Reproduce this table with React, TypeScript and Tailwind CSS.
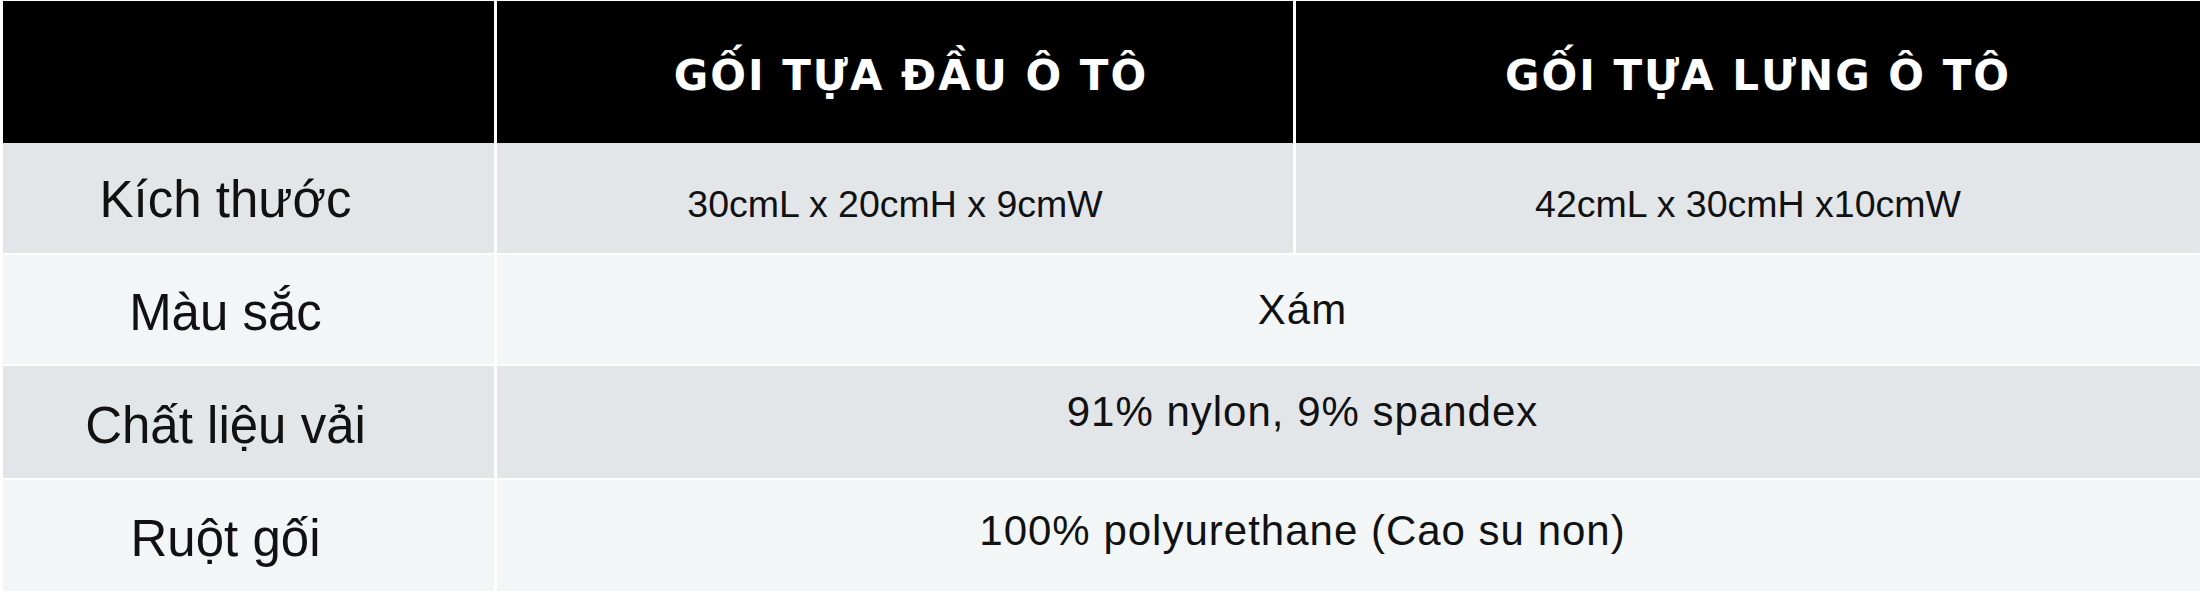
import React from 'react';

const rows = [
  { label: 'Màu sắc', value: 'Xám', bg: 'bg-[#f3f6f6]', h: 'h-[109px]', vp: 'pb-0' },
  { label: 'Chất liệu vải', value: '91% nylon, 9% spandex', bg: 'bg-[#e2e6e9]', h: 'h-[112px]', vp: 'pb-[22px]' },
  { label: 'Ruột gối', value: '100% polyurethane (Cao su non)', bg: 'bg-[#f3f6f6]', h: 'h-[111px]', vp: 'pb-[10px]' },
];

export default function App() {
  return (
    <div className="w-[2203px] h-[592px] bg-white pl-[3px] pt-[1px] font-['Liberation_Sans',Arial,sans-serif] text-[#111]">
      <div className="w-[2197px] flex flex-col">
        {/* header */}
        <div className="grid grid-cols-[491px_796px_904px] gap-x-[3px] h-[142px]">
          <div className="bg-black" />
          <div className="bg-black flex items-center justify-center pl-[32px] pt-[6px]">
            <span className="font-['DejaVu_Sans',sans-serif] font-bold text-[42px] tracking-[2px] text-white">GỐI TỰA ĐẦU Ô TÔ</span>
          </div>
          <div className="bg-black flex items-center justify-center pl-[20px] pt-[6px]">
            <span className="font-['DejaVu_Sans',sans-serif] font-bold text-[42px] tracking-[2px] text-white">GỐI TỰA LƯNG Ô TÔ</span>
          </div>
        </div>

        {/* kích thước */}
        <div className="grid grid-cols-[491px_796px_904px] gap-x-[3px] h-[110px]">
          <div className="bg-[#e2e6e9] flex items-center justify-center pr-[46px] pt-[4px]">
            <span className="text-[51px]">Kích thước</span>
          </div>
          <div className="bg-[#e2e6e9] flex items-center justify-center pt-[12px]">
            <span className="text-[37.5px]">30cmL x 20cmH x 9cmW</span>
          </div>
          <div className="bg-[#e2e6e9] flex items-center justify-center pt-[12px]">
            <span className="text-[37.5px]">42cmL x 30cmH x10cmW</span>
          </div>
        </div>

        {rows.map((r, i) => (
          <div key={i} className={`grid grid-cols-[491px_1703px] gap-x-[3px] mt-[2px] ${r.h}`}>
            <div className={`${r.bg} flex items-center justify-center pr-[46px] pt-[8px]`}>
              <span className="text-[51px]">{r.label}</span>
            </div>
            <div className={`${r.bg} flex items-center justify-center pr-[92px] ${r.vp}`}>
              <span className="text-[42px] tracking-[1px]">{r.value}</span>
            </div>
          </div>
        ))}
      </div>
    </div>
  );
}
